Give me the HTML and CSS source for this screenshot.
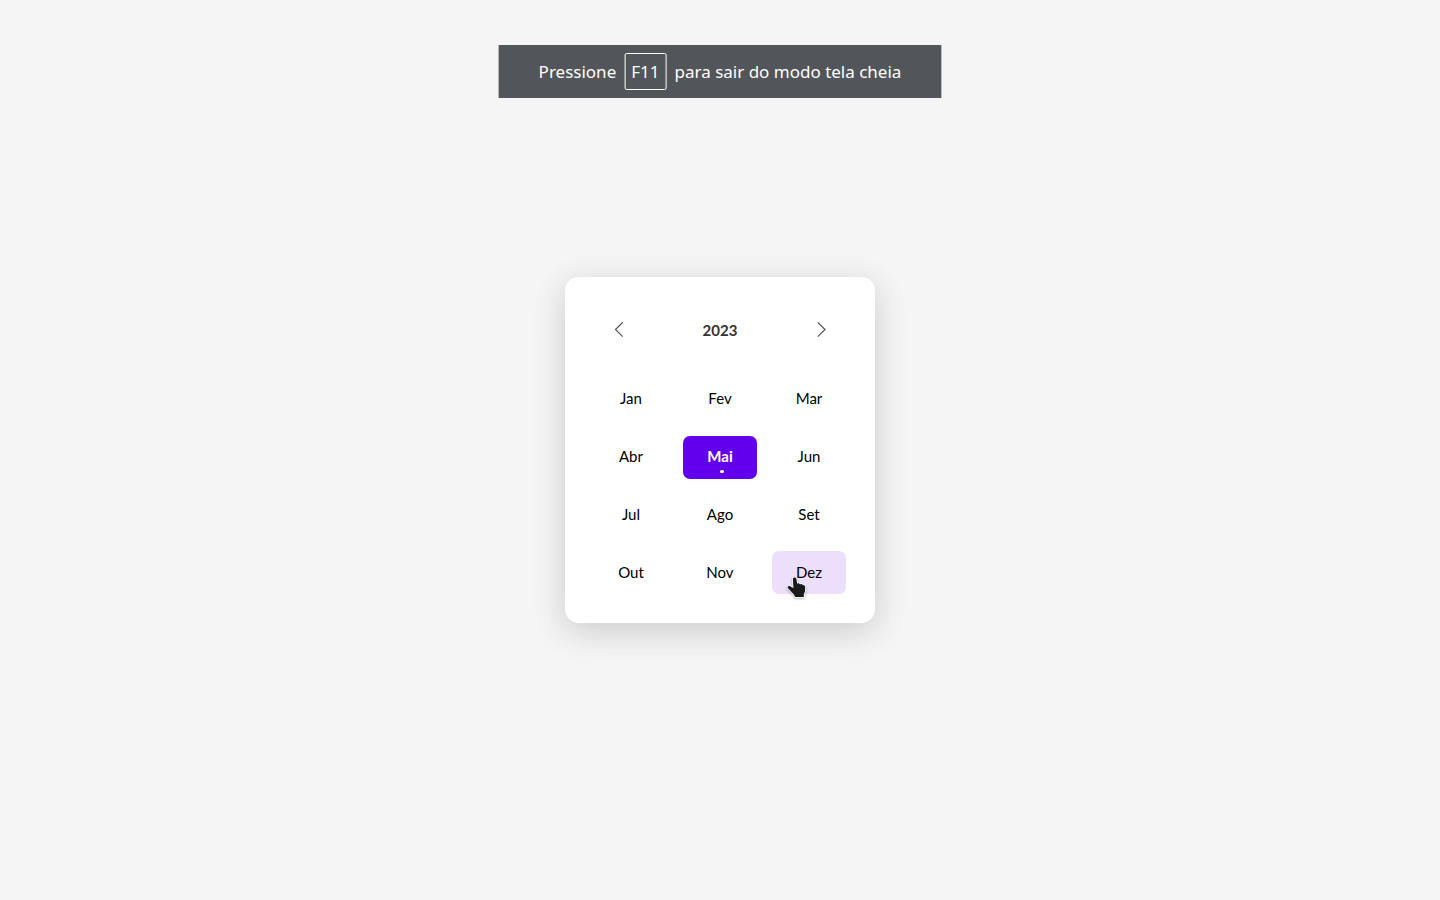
FILE: index.html
```html
<!DOCTYPE html>
<html lang="pt-BR">
<head>
  <meta charset="utf-8">
  <meta name="viewport" content="width=device-width, initial-scale=1">
  <title>Calendário</title>
  <link rel="stylesheet" href="styles.css">
</head>
<body>
  <div class="notice" role="status">
    <span>Pressione</span>
    <kbd class="key">F11</kbd>
    <span>para sair do modo tela cheia</span>
  </div>

  <main class="picker">
    <header class="picker-header">
      <button class="arrow" type="button" aria-label="Ano anterior">
        <svg width="10" height="16" viewBox="0 0 10 16" aria-hidden="true"><path d="M8.7 .3 1.5 7.5l7.2 7.2"/></svg>
      </button>
      <h1 class="year">2023</h1>
      <button class="arrow" type="button" aria-label="Próximo ano">
        <svg width="10" height="16" viewBox="0 0 10 16" aria-hidden="true"><path d="M1.8 .3 9 7.5l-7.2 7.2"/></svg>
      </button>
    </header>
    <div class="months">
      <button class="month" type="button">Jan</button>
      <button class="month" type="button">Fev</button>
      <button class="month" type="button">Mar</button>
      <button class="month" type="button">Abr</button>
      <button class="month selected" type="button" aria-pressed="true">Mai</button>
      <button class="month" type="button">Jun</button>
      <button class="month" type="button">Jul</button>
      <button class="month" type="button">Ago</button>
      <button class="month" type="button">Set</button>
      <button class="month" type="button">Out</button>
      <button class="month" type="button">Nov</button>
      <button class="month hovered" type="button">Dez
        <svg class="pointer" width="22" height="24" viewBox="0 0 22 24" aria-hidden="true"><path d="M8.3 1.5C9.5 1.2 10.2 2 10.4 3L11.2 7.5L12.8 7.3L14 8.2L15.8 8L16.8 9L18.2 9.2L19.2 10.6L19 15.5L17.8 18.2V21H9.2L7.6 18.2L2.2 12.6C.9 11.2 2 9.7 3.6 10L7.4 12L6.9 3C6.9 2.2 7.4 1.6 8.3 1.5Z"/></svg>
      </button>
    </div>
  </main>
</body>
</html>
```
FILE: styles.css
```css
* {
  box-sizing: border-box;
}

body {
  display: flex;
  align-items: center;
  justify-content: center;
  min-height: 100vh;
  margin: 0;
  background: #f5f5f5;
  font-family: Lato, sans-serif;
}

button {
  border: 0;
  background: none;
  font: inherit;
  cursor: pointer;
}

/* Full-screen notice floating over the page */
.notice {
  position: fixed;
  top: 45px;
  left: 50%;
  display: flex;
  align-items: center;
  gap: 8px;
  padding: 8px 40px;
  background: #525559;
  color: #fff;
  font: 17px/24px "Noto Sans", sans-serif;
  white-space: nowrap;
  transform: translateX(-50%);
}

.key {
  padding: 5px 6px;
  border: 1px solid #fff;
  border-radius: 2px;
  font: inherit;
  line-height: 25px;
}

.picker {
  padding: 29px;
  border-radius: 14px;
  background: #fff;
  box-shadow: 0 7px 29px rgba(100, 100, 100, .16), 0 10px 40px rgba(0, 0, 0, .08);
}

.picker-header {
  display: flex;
  align-items: center;
  justify-content: space-between;
  height: 48px;
  margin-bottom: 24px;
}

.arrow {
  display: grid;
  place-items: center;
  width: 50px;
  height: 100%;
  padding: 0;
}

.arrow path {
  fill: none;
  stroke: #555;
  stroke-width: 1.2;
}

.year {
  margin: 0;
  color: #333;
  font-size: 15px;
  font-weight: 700;
}

.months {
  display: grid;
  grid-template-columns: repeat(3, 74px);
  grid-auto-rows: 1fr;
  gap: 15px;
  min-height: 216px;
}

.month {
  position: relative;
  padding: 0 0 2px;
  border-radius: 7px;
  color: #000;
  font-size: 15px;
  line-height: 20px;
}

.selected {
  background: #6200ee;
  color: #fff;
  font-weight: 700;
}

.selected::after {
  content: "";
  position: absolute;
  bottom: 6px;
  left: 37px;
  width: 4px;
  height: 3px;
  border-radius: 2px;
  background: #fff;
}

.hovered {
  background: #ecdffc;
}

.pointer {
  position: absolute;
  top: 25px;
  left: 14px;
  filter: drop-shadow(0 1px 1px rgba(0, 0, 0, .3));
}

.pointer path {
  fill: #1a1a1a;
  stroke: #fff;
  stroke-width: 1.6;
  paint-order: stroke;
}
```
